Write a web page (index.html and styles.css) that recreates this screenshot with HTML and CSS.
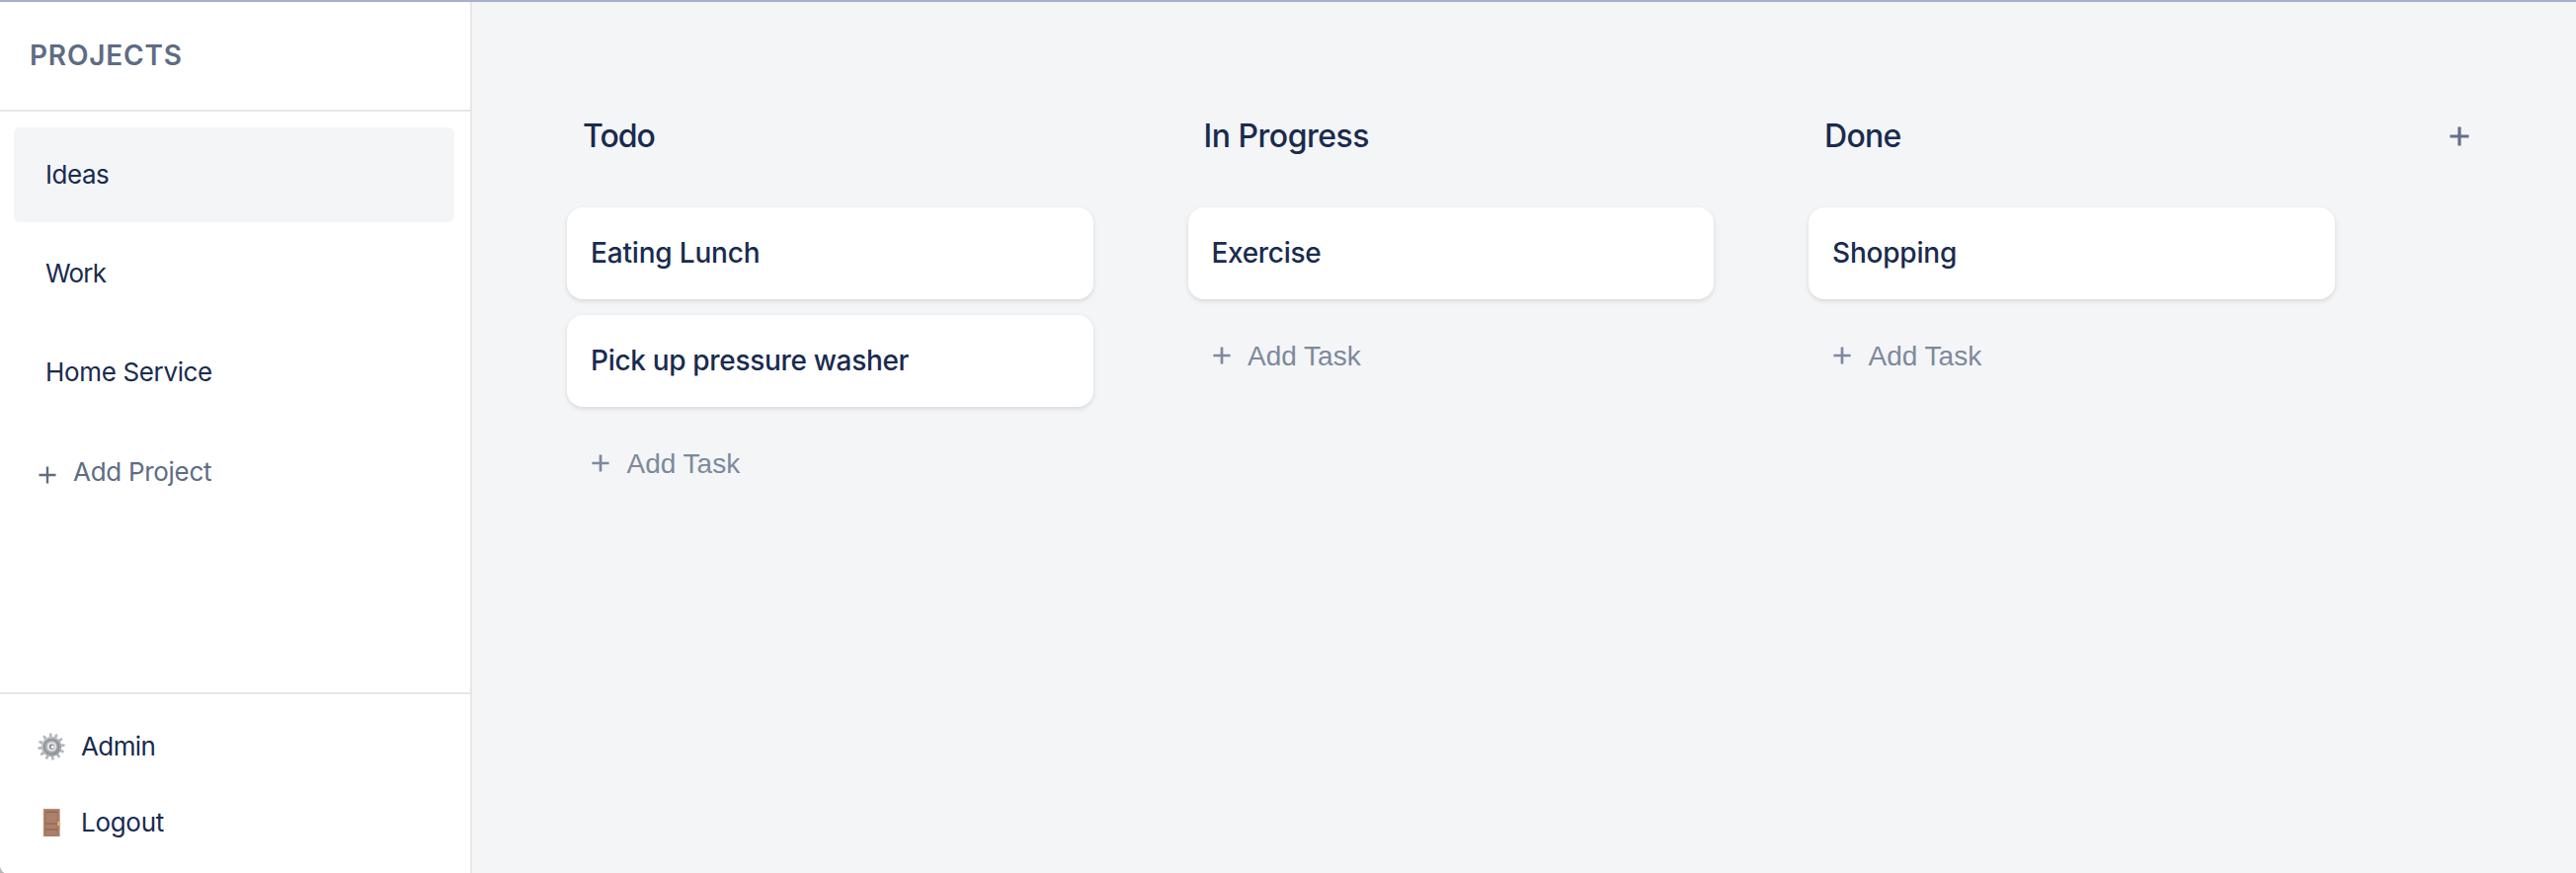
FILE: index.html
```html
<!DOCTYPE html>
<html lang="en">
<head>
<meta charset="utf-8">
<title>Projects</title>
<link rel="stylesheet" href="styles.css">
</head>
<body>
<div class="app">
  <aside class="sidebar">
    <header class="sidebar-header"><h1 class="sidebar-title">PROJECTS</h1></header>
    <nav class="projects">
      <a class="project project-active">Ideas</a>
      <a class="project project-short">Work</a>
      <a class="project project-long">Home Service</a>
      <a class="add-project">
        <svg class="add-project-icon" width="18" height="18" viewBox="0 0 18 18"><path d="M9 .5v17M.5 9h17" stroke="currentColor" stroke-width="2.4"/></svg>
        <span>Add Project</span>
      </a>
    </nav>
    <footer class="sidebar-footer">
      <a class="footer-link">
        <svg class="footer-icon" width="30" height="30" viewBox="0 0 30 30">
          <defs>
            <linearGradient id="steel" x1="0" y1="0" x2="1" y2="1"><stop offset="0" stop-color="#c9ced2"/><stop offset="1" stop-color="#8f979d"/></linearGradient>
          </defs>
          <g stroke="#b3babf" stroke-width="2.8" stroke-linecap="round">
            <path d="M15 15L14.2 2.6"/><path d="M15 15L20 3.6"/><path d="M15 15L25 7.6"/><path d="M15 15L27.4 13.6"/><path d="M15 15L26.4 20"/><path d="M15 15L22.6 25"/><path d="M15 15L16.4 27.4"/><path d="M15 15L10.4 26.4"/><path d="M15 15L5.2 22.6"/><path d="M15 15L2.6 16.6"/><path d="M15 15L3.6 10.4"/><path d="M15 15L7.8 5"/>
          </g>
          <circle cx="15" cy="15" r="10.2" fill="url(#steel)"/>
          <circle cx="15" cy="15" r="7.4" fill="#a6adb2" stroke="#858e94" stroke-width="1.4"/>
          <circle cx="15.4" cy="15" r="4.8" fill="#dfe3e6"/>
          <circle cx="15.6" cy="15" r="2.6" fill="#777d81"/>
          <circle cx="16.2" cy="15.2" r="1.6" fill="#fff"/>
        </svg>
        <span class="footer-label footer-label-admin">Admin</span>
      </a>
      <a class="footer-link">
        <svg class="footer-icon" width="30" height="30" viewBox="0 0 30 30">
          <rect x="7" y="1" width="16.4" height="28" rx=".6" fill="#a87d68"/>
          <path d="M7.3 29V1.4h15.8V29" fill="none" stroke="#bd9480" stroke-width=".8"/>
          <path d="M9.4 4h11.6v11H9.4zM9.4 17.6h11.6v3.6H9.4zM9.4 23h11.6v3.6H9.4z" fill="#ad806b"/>
          <path d="M9.2 4.2h12M9.2 16h12M9.2 22h12" stroke="#875f4c" stroke-width="1.1"/>
          <path d="M9.4 4v22.4M21 4v22.4" stroke="#99705b" stroke-width=".6"/>
          <rect x="21" y="14" width="2.4" height="4" rx=".6" fill="#d9b854"/>
        </svg>
        <span class="footer-label">Logout</span>
      </a>
    </footer>
  </aside>
  <main class="board">
    <section class="column">
      <h2 class="column-title column-title-todo">Todo</h2>
      <div class="cards">
        <article class="card card-lunch">Eating Lunch</article>
        <article class="card">Pick up pressure washer</article>
      </div>
      <button class="add-task"><svg width="18" height="18" viewBox="0 0 18 18"><path d="M9 .4v17.2M.4 9h17.2" stroke="currentColor" stroke-width="2.7"/></svg><span class="add-task-label">Add Task</span></button>
    </section>
    <section class="column">
      <h2 class="column-title">In Progress</h2>
      <div class="cards">
        <article class="card">Exercise</article>
      </div>
      <button class="add-task"><svg width="18" height="18" viewBox="0 0 18 18"><path d="M9 .4v17.2M.4 9h17.2" stroke="currentColor" stroke-width="2.7"/></svg><span class="add-task-label">Add Task</span></button>
    </section>
    <section class="column">
      <h2 class="column-title column-title-done">Done</h2>
      <div class="cards">
        <article class="card card-shopping">Shopping</article>
      </div>
      <button class="add-task"><svg width="18" height="18" viewBox="0 0 18 18"><path d="M9 .4v17.2M.4 9h17.2" stroke="currentColor" stroke-width="2.7"/></svg><span class="add-task-label">Add Task</span></button>
    </section>
    <button class="add-column" aria-label="Add column"><svg width="20" height="20" viewBox="0 0 20 20"><path d="M10 .5v19M.5 10h19" stroke="currentColor" stroke-width="3.2"/></svg></button>
  </main>
  <svg class="window-corner" width="5" height="6" viewBox="0 0 5 6"><path d="M0 0Q1 4 4.4 6H0z" fill="#b4b4b4"/></svg>
</div>
</body>
</html>
```
FILE: styles.css
```css
* {
  box-sizing: border-box;
}

body {
  margin: 0;
  font-family: Inter, sans-serif;
  color: #192b4f;
}

button {
  border: 0;
  padding: 0;
  background: none;
}

svg {
  display: block;
  flex: none;
}

.app {
  position: relative;
  display: flex;
  height: 884px;
  border-top: 2px solid #a4b1ca;
  background: #f4f5f7;
  overflow: hidden;
}

.sidebar {
  display: flex;
  flex-direction: column;
  flex: none;
  width: 478px;
  border-right: 2px solid #e6e6e6;
  background: #fff;
}

.sidebar-header {
  display: flex;
  align-items: center;
  height: 111px;
  padding: 0 30px 1px;
  border-bottom: 2px solid #e6e6e6;
}

.sidebar-title {
  margin: 0;
  font-size: 28px;
  font-weight: 600;
  letter-spacing: 0.8px;
  color: #5e6c84;
}

.projects {
  display: flex;
  flex-direction: column;
  flex: 1;
  gap: 4px;
  padding: 16px 16px 0 14px;
}

.project {
  display: flex;
  align-items: center;
  height: 96px;
  padding: 0 32px 2px;
  border-radius: 6px;
  font-size: 26px;
  letter-spacing: -0.45px;
}

.project-active {
  background: #f4f5f7;
}

.project-short {
  letter-spacing: -0.8px;
}

.project-long {
  letter-spacing: -0.35px;
}

.add-project {
  display: flex;
  align-items: center;
  gap: 17px;
  height: 96px;
  padding: 1px 25px 0;
  font-size: 26px;
  letter-spacing: -0.3px;
  color: #5e6c84;
}

.add-project-icon {
  margin-top: 6px;
}

.sidebar-footer {
  display: flex;
  flex-direction: column;
  height: 183px;
  padding: 14px 0 13px;
  border-top: 2px solid #e6e6e6;
}

.footer-link {
  display: flex;
  align-items: center;
  gap: 15px;
  height: 77px;
  padding-left: 37px;
  font-size: 26px;
}

.footer-label {
  letter-spacing: -0.3px;
}

.footer-label-admin {
  letter-spacing: -0.6px;
}

.board {
  display: flex;
  align-items: flex-start;
  flex: 1;
  gap: 96px;
  padding: 100px 0 0 96px;
}

.column {
  flex: none;
  width: 532.5px;
}

.column-title {
  display: flex;
  align-items: center;
  height: 72px;
  margin: 0 0 36px;
  padding: 0 0 1px 16px;
  font-size: 32px;
  font-weight: 500;
  letter-spacing: -0.5px;
}

.column-title-todo {
  letter-spacing: -1px;
}

.column-title-done {
  letter-spacing: -0.7px;
}

.cards {
  display: flex;
  flex-direction: column;
  gap: 16px;
}

.card {
  display: flex;
  align-items: center;
  height: 93px;
  padding: 0 24px 1px;
  border-radius: 16px;
  background: #fff;
  box-shadow: 0 2px 5px rgba(0, 0, 0, 0.12);
  font-size: 28px;
  font-weight: 500;
  letter-spacing: -0.32px;
}

.card-lunch {
  letter-spacing: -0.18px;
}

.card-shopping {
  letter-spacing: -0.2px;
}

.add-task {
  display: flex;
  align-items: center;
  gap: 17.5px;
  height: 60px;
  margin-top: 27px;
  padding-left: 25px;
  font-family: "Liberation Sans", sans-serif;
  font-size: 28px;
  color: #7e899c;
}

.add-task-label {
  padding-top: 2px;
}

.add-column {
  display: grid;
  place-items: center;
  width: 60px;
  height: 72px;
  color: #66708a;
}

.window-corner {
  position: absolute;
  left: 0;
  bottom: 0;
}
```
